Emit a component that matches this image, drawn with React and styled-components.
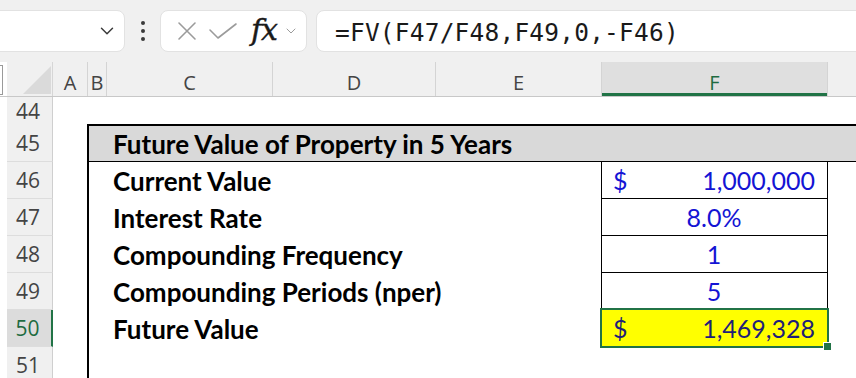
import React from "react";
import styled, { createGlobalStyle } from "styled-components";
import { ChevronDown } from "lucide-react";

const GlobalStyle = createGlobalStyle`
  html, body { margin: 0; padding: 0; background: #ffffff; }
  body { width: 856px; height: 378px; overflow: hidden; }
`;

const COLS = "7px 46px 35px 19px 166px 163px 166px 226px 1fr";
const CELL_FONT = `Lato, "Open Sans", sans-serif`;
const UI_FONT = `"Open Sans", "Noto Sans", sans-serif`;
const GREEN = "#217346";

const Page = styled.div`
  display: flex;
  flex-direction: column;
  width: 856px;
  height: 378px;
  overflow: hidden;
`;

/* ---------- formula bar ---------- */
const FormulaBar = styled.div`
  flex: none;
  display: flex;
  align-items: center;
  height: 62px;
  background: #f0f0f0;
  box-sizing: border-box;
`;

const Panel = styled.div`
  display: flex;
  align-items: center;
  height: 42px;
  box-sizing: border-box;
  background: #ffffff;
  border: 1px solid #e2e2e2;
  border-radius: 8px;
`;

const NameBox = styled(Panel)`
  width: 136px;
  margin-left: -11px;
  justify-content: flex-end;
  padding-right: 6px;
  color: #3a3a3a;
`;

const Kebab = styled.div`
  display: flex;
  flex-direction: column;
  gap: 4px;
  margin: 0 15px 0 16px;
  span {
    width: 4px;
    height: 4px;
    border-radius: 2px;
    background: #3a3a3a;
  }
`;

const ButtonsBox = styled(Panel)`
  width: 147px;
  padding: 0 0 0 12px;
`;

const IconSlot = styled.div`
  display: flex;
  align-items: center;
  justify-content: center;
  width: ${(p) => p.$w}px;
  height: 40px;
`;

const Fx = styled.span`
  font-family: "DejaVu Serif", "Liberation Serif", serif;
  font-style: italic;
  font-size: 30px;
  color: #1a1a1a;
  line-height: 1;
  margin-top: -3px;
  letter-spacing: -1px;
  -webkit-text-stroke: 0.4px #1a1a1a;
`;

const FormulaInput = styled(Panel)`
  flex: 1;
  margin-left: 9px;
  margin-right: -12px;
  padding-left: 18px;
  padding-top: 3px;
  font-family: "DejaVu Sans Mono", "Liberation Mono", monospace;
  font-size: 24.5px;
  letter-spacing: 0.2px;
  color: #1a1a1a;
`;

/* ---------- sheet grid ---------- */
const SheetRow = styled.div`
  display: grid;
  grid-template-columns: ${COLS};
  height: ${(p) => p.$h}px;
  flex: none;
`;

const HeaderRow = styled(SheetRow)`
  background: #f0f0f0;
  border-bottom: 1px solid #c8c8c8;
  box-sizing: border-box;
`;

const Gutter = styled.div`
  position: relative;
  background: #ffffff;
`;

const OutlineStub = styled.div`
  position: absolute;
  left: -4px;
  top: 3px;
  width: 7px;
  height: 30px;
  border: 1px solid #9a9a9a;
  background: #ffffff;
  box-sizing: border-box;
`;

const Corner = styled.div`
  display: flex;
  align-items: flex-end;
  justify-content: flex-end;
  padding: 0 1px 2px 0;
  border-right: 1px solid #d6d6d6;
  svg { display: block; }
`;

const ColHead = styled.div`
  display: flex;
  align-items: center;
  justify-content: center;
  font-family: ${UI_FONT};
  font-size: 20px;
  color: ${(p) => (p.$active ? "#1e6b41" : "#444444")};
  background: ${(p) => (p.$active ? "#dfdfdf" : "transparent")};
  border-right: 1px solid #d4d4d4;
  box-shadow: ${(p) => (p.$active ? `inset 0 -3px 0 ${GREEN}` : "none")};
  padding-top: 6px;
  box-sizing: border-box;
`;

const RowHead = styled.div`
  display: flex;
  align-items: center;
  justify-content: center;
  font-family: ${UI_FONT};
  font-size: 21px;
  color: ${(p) => (p.$active ? "#1e6b41" : "#444444")};
  background: ${(p) => (p.$active ? "#dcdcdc" : "#f0f0f0")};
  border-right: ${(p) => (p.$active ? `2px solid ${GREEN}` : "1px solid #cfcfcf")};
  border-bottom: 1px solid #dddddd;
  box-sizing: border-box;
  padding-right: 3px;
`;

const Blank = styled.div``;

const TableEdge = styled.div`
  border-left: 2px solid #000000;
  margin-left: -1px;
`;

const TitleCell = styled.div`
  grid-column: 4 / -1;
  display: flex;
  align-items: center;
  margin-left: -1px;
  margin-top: -1px;
  padding-left: 24px;
  background: #d9d9d9;
  border-top: 2px solid #000000;
  border-left: 2px solid #000000;
  border-bottom: 1px solid #000000;
  font-family: ${CELL_FONT};
  font-weight: 700;
  font-size: 26px;
  color: #000000;
  white-space: nowrap;
`;

const LabelCell = styled.div`
  grid-column: span 3;
  display: flex;
  align-items: center;
  padding-left: 6px;
  font-family: ${CELL_FONT};
  font-weight: 700;
  font-size: 26px;
  color: #000000;
  white-space: nowrap;
`;

const ValueCell = styled.div`
  position: relative;
  display: flex;
  align-items: center;
  justify-content: ${(p) => (p.$money ? "space-between" : "center")};
  padding: 0 12px 0 11px;
  margin-left: -1px;
  border-left: 1px solid #000000;
  border-right: 1px solid #000000;
  border-bottom: 1px solid ${(p) => (p.$selected ? "transparent" : "#000000")};
  background: ${(p) => (p.$selected ? "#ffff00" : "#ffffff")};
  font-family: ${CELL_FONT};
  font-size: 25px;
  color: ${(p) => (p.$selected ? "#1f1f78" : "#1414d4")};
  white-space: nowrap;

  ${(p) =>
    p.$selected &&
    `
    &::after {
      content: "";
      position: absolute;
      left: -2px;
      right: -2px;
      top: -2px;
      bottom: -2px;
      border: 2px solid ${GREEN};
      pointer-events: none;
    }
    &::before {
      content: "";
      position: absolute;
      right: -5px;
      bottom: -5px;
      width: 7px;
      height: 7px;
      background: ${GREEN};
      border: 1px solid #ffffff;
      z-index: 2;
    }
  `}
`;

const rows = [
  { n: 46, label: "Current Value", money: true, value: "1,000,000" },
  { n: 47, label: "Interest Rate", value: "8.0%" },
  { n: 48, label: "Compounding Frequency", value: "1" },
  { n: 49, label: "Compounding Periods (nper)", value: "5" },
  { n: 50, label: "Future Value", money: true, value: "1,469,328", selected: true },
];

const CloseIcon = () => (
  <svg width="20" height="20" viewBox="0 0 20 20" fill="none" stroke="#9b9b9b" strokeWidth="1.6" strokeLinecap="round">
    <path d="M2 2 L18 18 M18 2 L2 18" />
  </svg>
);

const CheckIcon = () => (
  <svg width="30" height="18" viewBox="0 0 30 18" fill="none" stroke="#9b9b9b" strokeWidth="1.6" strokeLinecap="round" strokeLinejoin="round">
    <path d="M2 8 L10 16 L28 2" />
  </svg>
);

const CornerMark = () => (
  <svg width="28" height="28" viewBox="0 0 28 28">
    <path d="M28 0 L28 28 L0 28 Z" fill="#dadada" />
  </svg>
);

export default function App() {
  return (
    <Page>
      <GlobalStyle />
      <FormulaBar>
        <NameBox>
          <ChevronDown size={22} strokeWidth={1.6} />
        </NameBox>
        <Kebab>
          <span />
          <span />
          <span />
        </Kebab>
        <ButtonsBox>
          <IconSlot $w={28}>
            <CloseIcon />
          </IconSlot>
          <IconSlot $w={44}>
            <CheckIcon />
          </IconSlot>
          <IconSlot $w={38}>
            <Fx>fx</Fx>
          </IconSlot>
          <IconSlot $w={16}>
            <ChevronDown size={16} strokeWidth={1.5} color="#9b9b9b" />
          </IconSlot>
        </ButtonsBox>
        <FormulaInput>=FV(F47/F48,F49,0,-F46)</FormulaInput>
      </FormulaBar>

      <HeaderRow $h={35}>
        <Gutter>
          <OutlineStub />
        </Gutter>
        <Corner>
          <CornerMark />
        </Corner>
        <ColHead>A</ColHead>
        <ColHead>B</ColHead>
        <ColHead>C</ColHead>
        <ColHead>D</ColHead>
        <ColHead>E</ColHead>
        <ColHead $active>F</ColHead>
        <Blank />
      </HeaderRow>

      <SheetRow $h={28}>
        <Gutter />
        <RowHead>44</RowHead>
      </SheetRow>

      <SheetRow $h={37}>
        <Gutter />
        <RowHead>45</RowHead>
        <Blank />
        <TitleCell>Future Value of Property in 5 Years</TitleCell>
      </SheetRow>

      {rows.map((r) => (
        <SheetRow key={r.n} $h={37}>
          <Gutter />
          <RowHead $active={r.selected}>{r.n}</RowHead>
          <Blank />
          <TableEdge />
          <LabelCell>{r.label}</LabelCell>
          <ValueCell $money={r.money} $selected={r.selected}>
            {r.money && <span>$</span>}
            <span>{r.value}</span>
          </ValueCell>
          <Blank />
        </SheetRow>
      ))}

      <SheetRow $h={37}>
        <Gutter />
        <RowHead>51</RowHead>
        <Blank />
        <TableEdge />
      </SheetRow>
    </Page>
  );
}
